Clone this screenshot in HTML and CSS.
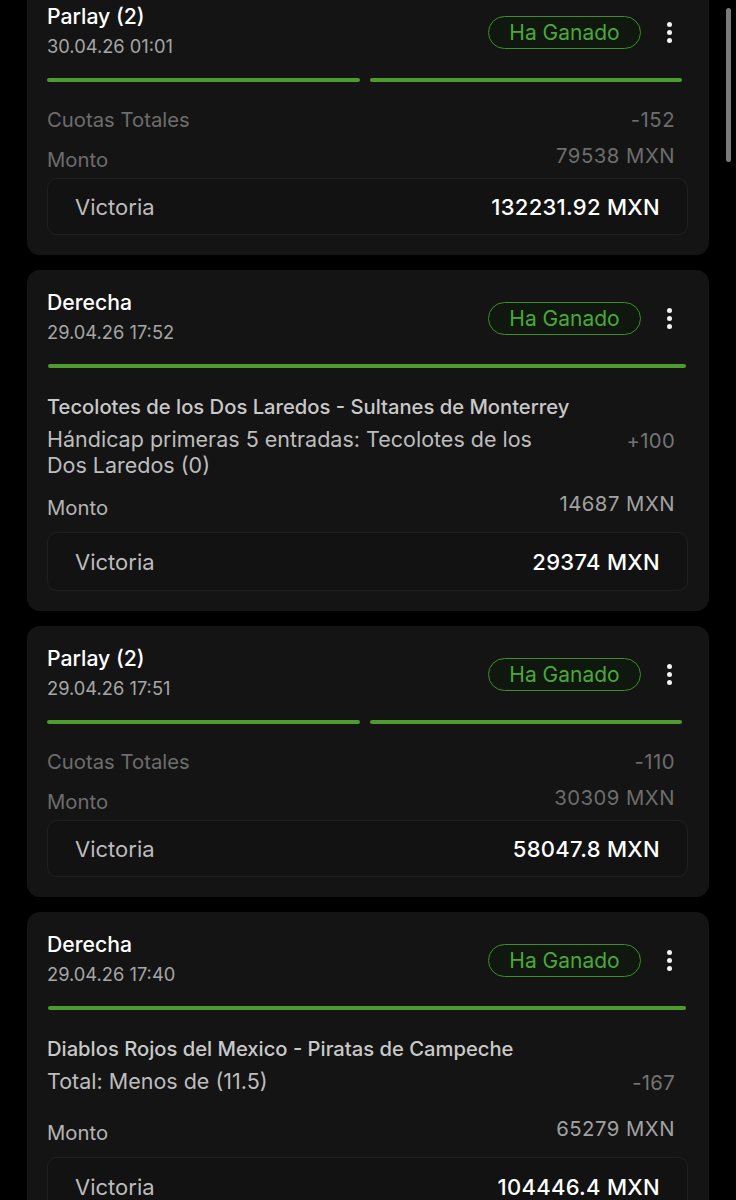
FILE: index.html
```html
<!DOCTYPE html>
<html lang="es">
<head>
<meta charset="utf-8">
<title>Apuestas</title>
<link rel="stylesheet" href="styles.css">
</head>
<body>
<div class="list">

  <section class="card card--parlay">
    <div class="head">
      <div class="head-text">
        <div class="title">Parlay (2)</div>
        <div class="date">30.04.26 01:01</div>
      </div>
      <div class="head-actions">
        <span class="badge">Ha Ganado</span>
        <span class="more"><i></i><i></i><i></i></span>
      </div>
    </div>
    <div class="bars"><span class="bar"></span><span class="bar"></span></div>
    <div class="row row--dim row--first"><span>Cuotas Totales</span><span class="val">-152</span></div>
    <div class="row row--dim"><span>Monto</span><span class="val val--up">79538 MXN</span></div>
    <div class="win"><span class="win-label">Victoria</span><span class="win-val">132231.92 MXN</span></div>
  </section>

  <section class="card card--single">
    <div class="head">
      <div class="head-text">
        <div class="title">Derecha</div>
        <div class="date">29.04.26 17:52</div>
      </div>
      <div class="head-actions">
        <span class="badge">Ha Ganado</span>
        <span class="more"><i></i><i></i><i></i></span>
      </div>
    </div>
    <div class="bars"><span class="bar"></span></div>
    <div class="match">Tecolotes de los Dos Laredos - Sultanes de Monterrey</div>
    <div class="market"><span class="market-name">Hándicap primeras 5 entradas: Tecolotes de los Dos Laredos (0)</span><span class="odds">+100</span></div>
    <div class="row row--stake"><span>Monto</span><span class="val val--up">14687 MXN</span></div>
    <div class="win"><span class="win-label">Victoria</span><span class="win-val">29374 MXN</span></div>
  </section>

  <section class="card card--parlay">
    <div class="head">
      <div class="head-text">
        <div class="title">Parlay (2)</div>
        <div class="date">29.04.26 17:51</div>
      </div>
      <div class="head-actions">
        <span class="badge">Ha Ganado</span>
        <span class="more"><i></i><i></i><i></i></span>
      </div>
    </div>
    <div class="bars"><span class="bar"></span><span class="bar"></span></div>
    <div class="row row--dim row--first"><span>Cuotas Totales</span><span class="val">-110</span></div>
    <div class="row row--dim"><span>Monto</span><span class="val val--up">30309 MXN</span></div>
    <div class="win"><span class="win-label">Victoria</span><span class="win-val">58047.8 MXN</span></div>
  </section>

  <section class="card card--single">
    <div class="head">
      <div class="head-text">
        <div class="title">Derecha</div>
        <div class="date">29.04.26 17:40</div>
      </div>
      <div class="head-actions">
        <span class="badge">Ha Ganado</span>
        <span class="more"><i></i><i></i><i></i></span>
      </div>
    </div>
    <div class="bars"><span class="bar"></span></div>
    <div class="match">Diablos Rojos del Mexico - Piratas de Campeche</div>
    <div class="market"><span class="market-name">Total: Menos de (11.5)</span><span class="odds">-167</span></div>
    <div class="row row--stake"><span>Monto</span><span class="val val--up">65279 MXN</span></div>
    <div class="win"><span class="win-label">Victoria</span><span class="win-val">104446.4 MXN</span></div>
  </section>

</div>
<div class="scrollbar"></div>
</body>
</html>
```

FILE: styles.css
```css
* { box-sizing: border-box; }

html, body {
  margin: 0;
  padding: 0;
  background: #000;
  height: 1200px;
  overflow: hidden;
}

body {
  font-family: Inter, Roboto, "Liberation Sans", sans-serif;
  color: #fff;
}

.list {
  display: flex;
  flex-direction: column;
  gap: 15px;
  padding: 0 27px;
  margin-top: -16px;
}

.card {
  background: #141414;
  border-radius: 13px;
  padding: 20px 21px 20px 20px;
}

.head {
  display: flex;
  justify-content: space-between;
  align-items: center;
}

.title {
  font-size: 21.2px;
  line-height: 24px;
  font-weight: 500;
  color: #fff;
}

.date {
  margin-top: 6px;
  font-size: 18.3px;
  line-height: 24px;
  color: #a6a6a6;
}

.head-actions {
  display: flex;
  align-items: center;
  gap: 23px;
  margin-right: 14px;
  margin-top: 2px;
}

.badge {
  display: inline-flex;
  align-items: center;
  justify-content: center;
  width: 153px;
  height: 33px;
  border: 1.5px solid #3e8e29;
  border-radius: 17px;
  background: #10170e;
  color: #4aa83a;
  font-size: 21px;
}

.more {
  display: flex;
  flex-direction: column;
  gap: 3px;
  width: 10px;
  align-items: center;
}

.more i {
  display: block;
  width: 5px;
  height: 5px;
  border-radius: 50%;
  background: #f2f2f2;
}

.bars {
  display: flex;
  gap: 10px;
  margin-top: 20px;
  margin-right: 6px;
}

.card--single .bars {
  margin-left: 1px;
  margin-right: 2px;
}

.bar {
  flex: 1;
  height: 4px;
  border-radius: 2px;
  background: #4c9c2e;
}

.row {
  display: flex;
  justify-content: space-between;
  align-items: flex-start;
  padding-right: 13px;
  font-size: 20.3px;
  line-height: 24px;
  margin-top: 16px;
}

.row--first { margin-top: 26px; }

.row--dim { color: #6d6d6d; }

.row--stake {
  color: #b4b4b4;
  margin-top: 18px;
}

.row--stake .val { color: #a2a2a2; }

.val { letter-spacing: 0.5px; }

.val--up { margin-top: -4px; }

.match {
  margin-top: 27px;
  font-size: 20.2px;
  line-height: 24px;
  font-weight: 500;
  color: #c9c9c9;
}

.market {
  display: flex;
  justify-content: space-between;
  align-items: flex-start;
  gap: 30px;
  min-height: 35px;
  margin-top: 7px;
  padding-right: 13px;
  font-size: 21.5px;
  line-height: 26px;
}

.market-name {
  color: #bdbdbd;
  max-width: 505px;
}

.odds {
  color: #757575;
  white-space: nowrap;
  margin-top: 2px;
  font-size: 20.3px;
  letter-spacing: 0.3px;
}

.win {
  display: flex;
  justify-content: space-between;
  align-items: center;
  height: 59px;
  margin-top: 12px;
  padding: 0 27px;
  border: 1px solid #202020;
  border-radius: 10px;
  background: #121212;
}

.card--parlay .win {
  margin-top: 6px;
  height: 57px;
}

.win-label {
  font-size: 22px;
  color: #bcbcbc;
}

.win-val {
  font-size: 22px;
  font-weight: 500;
  color: #fff;
  letter-spacing: 0.3px;
}

.scrollbar {
  position: fixed;
  top: 8px;
  right: 5px;
  width: 5px;
  height: 154px;
  border-radius: 3px;
  background: #7a7a7a;
}
```
